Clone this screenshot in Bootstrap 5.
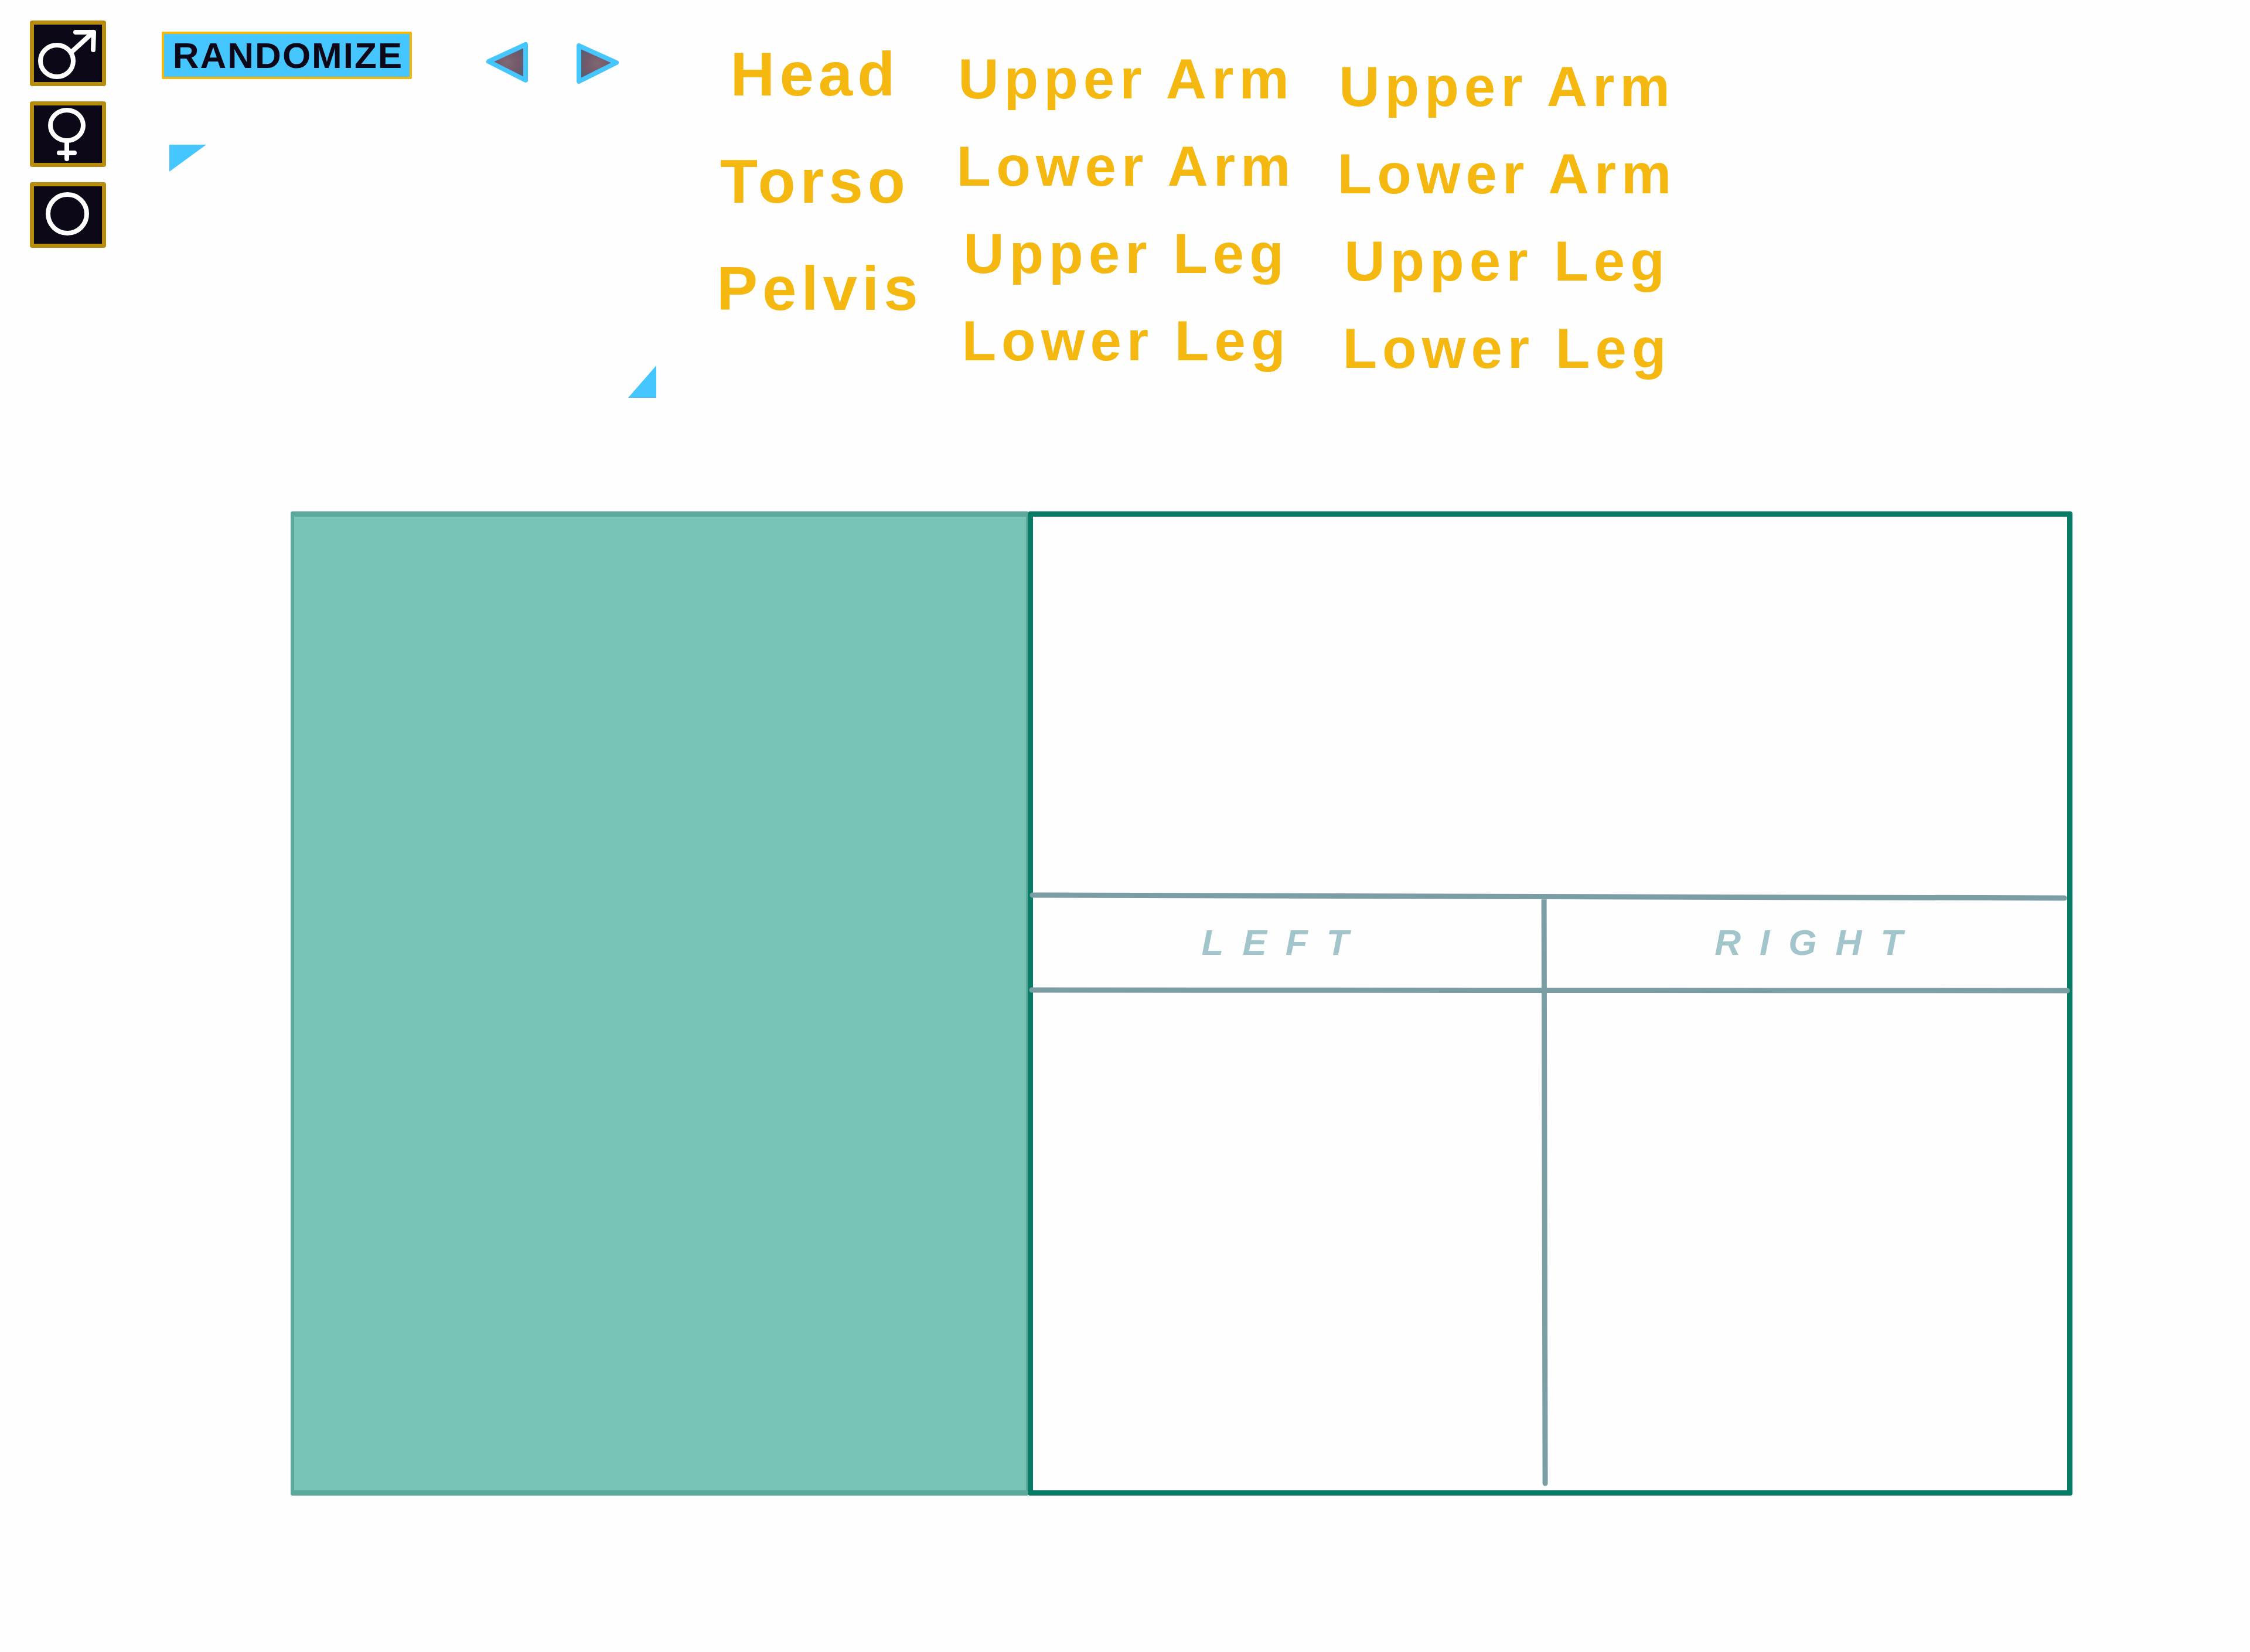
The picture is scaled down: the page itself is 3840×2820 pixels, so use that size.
<!DOCTYPE html>
<html lang="en">
<head>
<meta charset="utf-8">
<meta name="viewport" content="width=device-width, initial-scale=1">
<title>Body part picker</title>
<link href="https://cdn.jsdelivr.net/npm/bootstrap@5.3.0/dist/css/bootstrap.min.css" rel="stylesheet">
<style>
  :root { --gold: #f4b810; --sky: #46c6ff; --ink: #0c0818; --line: #7b9ea4; }
  body { background: #fefefe; font-family: "Liberation Sans", Arial, sans-serif; font-weight: 700; }
  .plain { border: 0; background: none; padding: 0; font-weight: 700; border-radius: 0; }
  .toolbar { padding: 35px 51px 0; min-height: 873px; }

  .gender-list { gap: 26px; width: 130px; margin-right: 95px; }
  .gender-btn { height: 112px; padding: 0; background: var(--ink); border: 7px solid #b88c0c; border-radius: 4px; }
  .gender-btn svg { display: block; width: 130px; height: 112px; margin: -7px; fill: none; stroke: #fff; stroke-width: 8; stroke-linecap: round; stroke-linejoin: round; }

  .generator { width: 844px; padding-top: 19px; margin-right: 99px; }
  .random-btn { width: 427px; height: 81px; padding: 0 0 0 4px; background: var(--sky); border: 4px solid var(--gold); border-radius: 2px; color: var(--ink); font-size: 62px; line-height: 73px; letter-spacing: 2px; font-weight: 700; }
  .arrows { margin-left: 127px; gap: 80px; padding-top: 16px; }
  .arrows svg { display: block; width: 73px; height: 74px; stroke: var(--sky); stroke-width: 8; stroke-linejoin: round; }
  .preview { margin: 103px 0 0 13px; height: 432px; }
  .preview svg { fill: var(--sky); display: block; }

  .parts { color: var(--gold); }
  .parts .plain { color: var(--gold); text-align: center; white-space: nowrap; }
  .core-parts { width: 340px; margin-right: 59px; }
  .core-parts .plain { padding-left: 4px; font-size: 105px; line-height: 183px; letter-spacing: 8px; }
  .limb-parts { width: 600px; margin-right: 50px; padding-top: 25px; }
  .limb-parts .plain { padding-left: 8px; font-size: 96px; line-height: 149px; letter-spacing: 9px; }
  .limb-parts.right-side { padding-top: 38px; margin-right: 0; }

  .stage { padding: 0 303px 120px 496px; }
  .canvas-pane { flex: 1260 1 0; min-height: 1680px; background: #78c4b7; border: 9px solid #5ba99b; border-width: 9px 3px 9px 6px; border-radius: 3px 0 0 3px; }
  .detail-pane { flex: 1781 1 0; border: 9px solid #067b66; border-radius: 4px; }
  .detail-top { height: 646px; }
  .side-head { height: 162px; color: #a2c5cb; font-size: 62px; line-height: 162px; font-style: italic; letter-spacing: 32px; text-align: center; }
  .side-head:first-child { padding-right: 24px; }
  .side-head:last-child { padding-left: 32px; }
  .rules { position: absolute; top: -9px; left: -9px; width: calc(100% + 18px); height: calc(100% + 18px); fill: none; stroke: var(--line); stroke-width: 9; stroke-linecap: round; }
</style>
<script src="https://cdn.jsdelivr.net/npm/bootstrap@5.3.0/dist/js/bootstrap.bundle.min.js"></script>
</head>
<body>
<header class="toolbar d-flex align-items-start">
  <div class="gender-list d-flex flex-column flex-shrink-0">
    <button class="gender-btn" type="button" aria-label="Male"><svg viewBox="0 0 130 112"><ellipse cx="46" cy="69" rx="28" ry="27"/><path d="M73 52 108 20M78 20H109L108 50"/></svg></button>
    <button class="gender-btn" type="button" aria-label="Female"><svg viewBox="0 0 130 112"><ellipse cx="63" cy="41" rx="28" ry="26"/><path d="M63 67V98M50 88H76"/></svg></button>
    <button class="gender-btn" type="button" aria-label="Neutral"><svg viewBox="0 0 130 112"><circle cx="64" cy="54" r="33"/></svg></button>
  </div>

  <div class="generator flex-shrink-0">
    <div class="d-flex align-items-start">
      <button class="random-btn" type="button">RANDOMIZE</button>
      <div class="arrows d-flex">
        <button class="plain" type="button" aria-label="Previous">
          <svg viewBox="0 0 73 74">
            <defs><radialGradient id="glow"><stop offset="0" stop-color="#7d6873"/><stop offset=".6" stop-color="#75596a"/><stop offset="1" stop-color="#595d70"/></radialGradient></defs>
            <path fill="url(#glow)" d="M4 35 67 6V67Z"/>
          </svg>
        </button>
        <button class="plain" type="button" aria-label="Next">
          <svg viewBox="0 0 73 74"><path fill="url(#glow)" d="M5 8 69 37 5 69Z"/></svg>
        </button>
      </div>
    </div>
    <div class="preview d-flex justify-content-between">
      <svg width="63" height="46"><path d="M0 0H63L0 46Z"/></svg>
      <svg class="align-self-end" width="48" height="55"><path d="M48 0V55H0Z"/></svg>
    </div>
  </div>

  <nav class="parts d-flex align-items-start" aria-label="Body parts">
    <div class="core-parts d-flex flex-column flex-shrink-0">
      <button class="plain" type="button">Head</button>
      <button class="plain" type="button">Torso</button>
      <button class="plain" type="button">Pelvis</button>
    </div>
    <div class="limb-parts d-flex flex-column flex-shrink-0">
      <button class="plain" type="button">Upper Arm</button>
      <button class="plain" type="button">Lower Arm</button>
      <button class="plain" type="button">Upper Leg</button>
      <button class="plain" type="button">Lower Leg</button>
    </div>
    <div class="limb-parts right-side d-flex flex-column flex-shrink-0">
      <button class="plain" type="button">Upper Arm</button>
      <button class="plain" type="button">Lower Arm</button>
      <button class="plain" type="button">Upper Leg</button>
      <button class="plain" type="button">Lower Leg</button>
    </div>
  </nav>
</header>

<main class="stage d-flex">
  <section class="canvas-pane" aria-label="Figure"></section>
  <section class="detail-pane position-relative" aria-label="Details">
    <div class="detail-top"></div>
    <div class="d-flex">
      <div class="side-head w-50">LEFT</div>
      <div class="side-head w-50">RIGHT</div>
    </div>
    <svg class="rules" viewBox="0 0 1783 1680" preserveAspectRatio="none" aria-hidden="true">
      <path d="M8 655 1769 660M7 817 1774 818M881 659 883 1659"/>
    </svg>
  </section>
</main>
</body>
</html>
